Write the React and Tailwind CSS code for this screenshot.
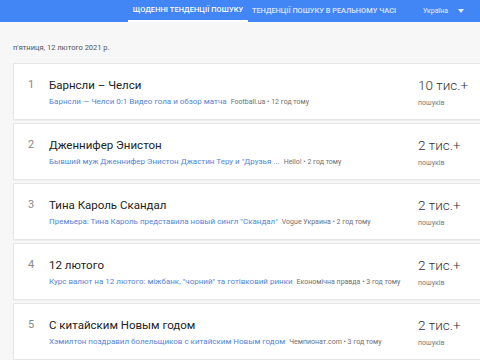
const stories = [
  {
    rank: 1,
    title: 'Барнсли – Челси',
    link: 'Барнсли — Челси 0:1 Видео гола и обзор матча',
    source: 'Football.ua • 12 год тому',
    count: '10 тис.+',
  },
  {
    rank: 2,
    title: 'Дженнифер Энистон',
    link: 'Бывший муж Дженнифер Энистон Джастин Теру и "Друзья ...',
    source: 'Hello! • 2 год тому',
    count: '2 тис.+',
  },
  {
    rank: 3,
    title: 'Тина Кароль Скандал',
    link: 'Премьера: Тина Кароль представила новый сингл "Скандал"',
    source: 'Vogue Украина • 2 год тому',
    count: '2 тис.+',
  },
  {
    rank: 4,
    title: '12 лютого',
    link: 'Курс валют на 12 лютого: міжбанк, "чорний" та готівковий ринки',
    source: 'Економічна правда • 3 год тому',
    count: '2 тис.+',
  },
  {
    rank: 5,
    title: 'С китайским Новым годом',
    link: 'Хэмилтон поздравил болельщиков с китайским Новым годом',
    source: 'Чемпионат.com • 3 год тому',
    count: '2 тис.+',
  },
];

function StoryCard({ story }) {
  return (
    <div className="flex w-[520px] h-[57px] shrink-0 items-start pt-[13px] bg-white border border-[#e6e6e6] shadow-[0_1px_1px_rgba(0,0,0,0.03)]">
      <div className="w-[35px] pl-[14px] text-[11px] leading-[16px] text-[#888]">{story.rank}</div>
      <div className="w-[369px] flex flex-col">
        <div className="text-[11.5px] leading-[16px] text-[#222]">{story.title}</div>
        <div className="mt-[3px] flex items-baseline whitespace-nowrap leading-[12px]">
          <span className="text-[8px] text-[#5485d6]">{story.link}</span>
          <span className="ml-[4px] text-[7px] text-[#707070]">{story.source}</span>
        </div>
      </div>
      <div className="flex flex-col">
        <div className="text-[13.5px] leading-[16px] font-light text-[#333]">{story.count}</div>
        <div className="mt-[4px] text-[7px] leading-[12px] text-[#7a7a7a]">пошуків</div>
      </div>
    </div>
  );
}

export default function App() {
  return (
    <div className="w-[480px] h-[360px] overflow-hidden bg-[#f7f7f7] font-['Roboto',sans-serif]">
      {/* Top tabs */}
      <div className="h-[22px] bg-[#4285f4] flex items-stretch">
        <div className="w-[128px]" />
        <div className="w-[120px] flex items-center justify-center border-b-2 border-white text-[7.4px] font-medium text-white tracking-[0.1px]">
          ЩОДЕННІ ТЕНДЕНЦІЇ ПОШУКУ
        </div>
        <div className="w-[152px] flex items-center justify-center text-[7.4px] font-medium text-white/80">
          ТЕНДЕНЦІЇ ПОШУКУ В РЕАЛЬНОМУ ЧАСІ
        </div>
        <div className="flex items-center pl-[23px] text-[7px] text-white/85">
          Україна
          <span className="ml-[10px] w-0 h-0 border-l-[3.5px] border-r-[3.5px] border-t-[4px] border-l-transparent border-r-transparent border-t-white/85" />
        </div>
      </div>

      <div className="pl-[13px] pt-[21px] text-[7.5px] leading-[10px] text-[#555]">п'ятниця, 12 лютого 2021 р.</div>

      <div className="mt-[10px] pl-[13px] flex flex-col gap-[3px]">
        {stories.map((s) => (
          <StoryCard key={s.rank} story={s} />
        ))}
      </div>
    </div>
  );
}
